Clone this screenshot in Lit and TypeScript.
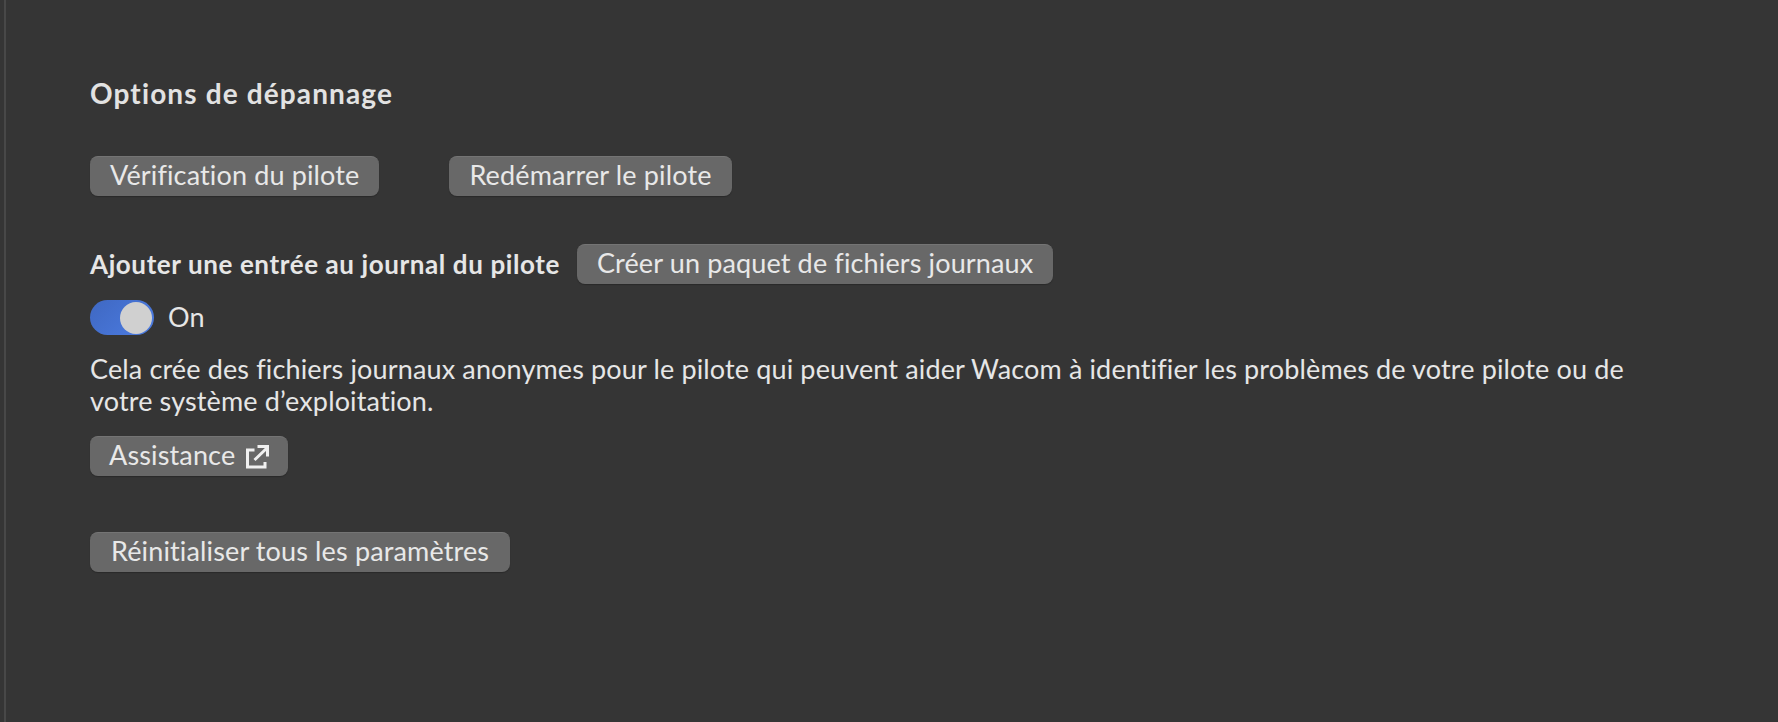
import { LitElement, html, css } from "lit";
import { customElement } from "lit/decorators.js";

@customElement("app-root")
export class AppRoot extends LitElement {
  static styles = css`
    :host { display: block; width: 1778px; height: 722px; background: #353535; color: #e6e6e6; font-family: "Lato", "Noto Sans", sans-serif; font-size: 27px; letter-spacing: 0.14px; font-variant-ligatures: none; overflow: hidden; }
    .frame { box-sizing: border-box; height: 722px; margin-left: 4px; border-left: 2px solid #484848; }
    .page { padding: 76px 0 0 84px; display: flex; flex-direction: column; align-items: flex-start; }
    h2 { margin: 0; font-size: 28px; font-weight: 700; line-height: 34px; letter-spacing: 1.13px; color: #e2e2e2; }
    .btn { display: inline-flex; align-items: center; gap: 11px; height: 40px; padding: 0 20px 5px; box-sizing: border-box; background: #686868; border: 0; border-top: 1px solid #747474; border-radius: 8px; color: #e8e8e8; font: inherit; letter-spacing: inherit; box-shadow: 0 1px 1px #2a2a2a; }
    .row1 { display: flex; gap: 70px; margin-top: 46px; }
    .row2 { display: flex; align-items: center; gap: 17px; margin-top: 48px; }
    .label { font-weight: 700; font-size: 26px; letter-spacing: 0.6px; }
    .toggle-row { display: flex; align-items: center; gap: 14px; margin-top: 16px; }
    .on { padding-bottom: 2px; }
    .toggle { width: 64px; height: 35px; border-radius: 18px; background: linear-gradient(135deg, #3f68c2, #4c7ce2); position: relative; }
    .knob { position: absolute; right: 2px; top: 2px; width: 32px; height: 32px; border-radius: 50%; background: #d0d0d0; }
    p { margin: 18px 0 0; width: 1600px; line-height: 32px; }
    .assist { margin-top: 19px; padding-left: 19px; padding-right: 18px; }
    .assist svg { margin-top: 5px; }
    .reset { margin-top: 56px; padding-left: 21px; padding-right: 21px; }
  `;
  render() {
    return html`<div class="frame"><div class="page">
      <h2>Options de dépannage</h2>
      <div class="row1"><button class="btn">Vérification du pilote</button><button class="btn">Redémarrer le pilote</button></div>
      <div class="row2"><span class="label">Ajouter une entrée au journal du pilote</span><button class="btn">Créer un paquet de fichiers journaux</button></div>
      <div class="toggle-row"><div class="toggle"><div class="knob"></div></div><span class="on">On</span></div>
      <p>Cela crée des fichiers journaux anonymes pour le pilote qui peuvent aider Wacom à identifier les problèmes de votre pilote ou de<br />votre système d’exploitation.</p>
      <button class="btn assist">Assistance
        <svg width="24" height="24" viewBox="0 0 24 24" fill="none" stroke="#f0f0f0" stroke-width="3"><path d="M8.5 5H1.5V22H19V17M8.5 15 21.5 2.5M11.5 1.5H21.5V11.5"/></svg>
      </button>
      <button class="btn reset">Réinitialiser tous les paramètres</button>
    </div></div>`;
  }
}
